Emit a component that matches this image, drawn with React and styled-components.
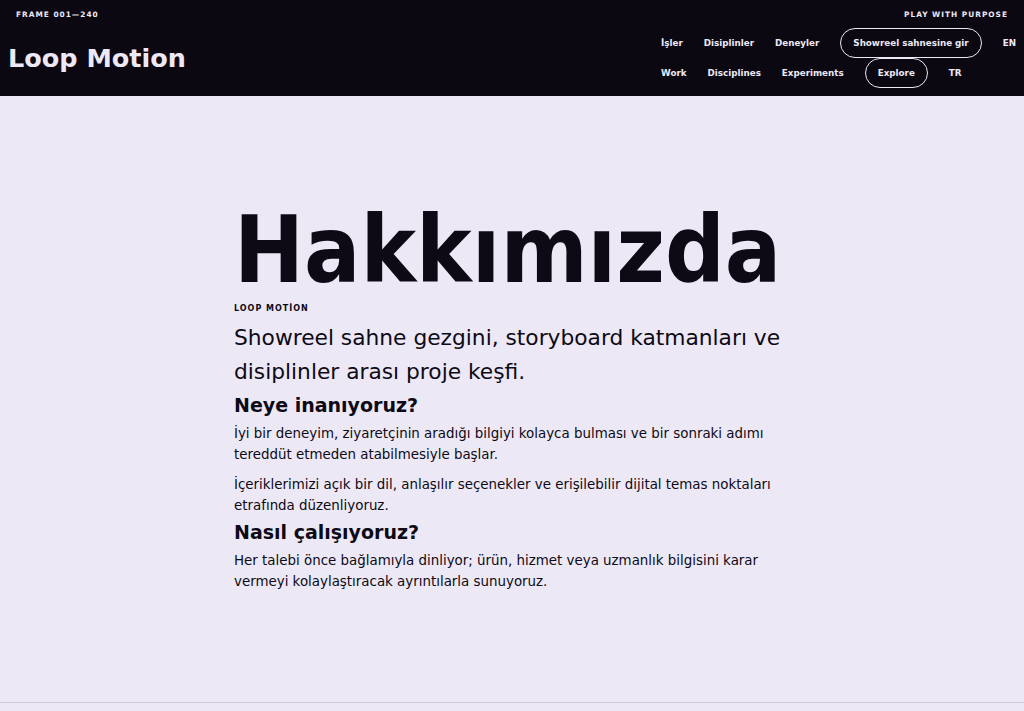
import React from "react"
import styled, { createGlobalStyle } from "styled-components"

const GlobalStyle = createGlobalStyle`
    * { box-sizing: border-box; }
    body {
        margin: 0;
        background: #ece8f6;
        color: #0d0a15;
        font-family: "DejaVu Sans", "Liberation Sans", sans-serif;
    }
`;

const Header = styled.header`
    background: #0b0812;
    color: #ece8f6;
    height: 96px;
`;

const TopStrip = styled.div`
    display: flex;
    justify-content: space-between;
    align-items: center;
    padding: 9px 16px 0;
    height: 20px;
`;

const Kicker = styled.span`
    display: block;
    font-size: ${p => p.$dark ? 8 : 7.4}px;
    line-height: 10px;
    font-weight: 700;
    letter-spacing: 1px;
    color: ${p => p.$dark ? "#0d0a15" : "#ece8f6"};
    margin-top: ${p => p.$dark ? 12 : 0}px;
`;

const MainRow = styled.div`
    display: flex;
    justify-content: space-between;
    align-items: center;
    padding: 8px 8px 0;
`;

const Brand = styled.a`
    font-size: 25.5px;
    font-weight: 700;
    color: #ece8f6;
    text-decoration: none;
`;

const Nav = styled.nav`
    display: flex;
    flex-direction: column;
    align-items: flex-start;
`;

const NavRow = styled.ul`
    display: flex;
    align-items: center;
    list-style: none;
    margin: 0;
    padding: 0;
    height: 30px;
`;

const NavLink = styled.a`
    display: block;
    font-size: 8.75px;
    font-weight: 700;
    color: #ece8f6;
    text-decoration: none;
    white-space: nowrap;
    margin-right: ${p => p.$gap ?? 21}px;
`;

const Pill = styled.button`
    font-family: inherit;
    font-size: 8.75px;
    font-weight: 700;
    color: #ece8f6;
    background: transparent;
    border: 1px solid #ece8f6;
    border-radius: 999px;
    height: 30px;
    padding: 0 12px;
    margin-right: 21px;
    white-space: nowrap;
    cursor: pointer;
`;

const Main = styled.main`
    min-height: 606px;
    display: flex;
    align-items: center;
    justify-content: center;
    padding: 23px 0 20px;
`;

const Article = styled.article`
    width: 556px;
`;

const Title = styled.h1`
    font-family: "DejaVu Sans Condensed", "DejaVu Sans", sans-serif;
    font-stretch: condensed;
    font-size: 93px;
    font-weight: 700;
    line-height: 0.9;
    margin: 0;
`;

const Lead = styled.p`
    font-size: 21.75px;
    line-height: 34px;
    margin: 7px 0 0;
`;

const SectionTitle = styled.h2`
    font-size: 19px;
    font-weight: 700;
    line-height: 24px;
    margin: 6px 0 0;

    p + & {
        margin-top: 4px;
    }
`;

const Paragraph = styled.p`
    font-size: 13.4px;
    line-height: 21px;
    margin: 6px 0 0;

    & + & {
        margin-top: 9px;
    }
`;

const Footer = styled.footer`
    border-top: 1px solid #cdc8da;
    height: 40px;
`;

const App = () => {
    return (
        <>
            <GlobalStyle />
            <Header>
                <TopStrip>
                    <Kicker>FRAME 001—240</Kicker>
                    <Kicker>PLAY WITH PURPOSE</Kicker>
                </TopStrip>
                <MainRow>
                    <Brand href="#">Loop Motion</Brand>
                    <Nav>
                        <NavRow>
                            <li><NavLink href="#">İşler</NavLink></li>
                            <li><NavLink href="#">Disiplinler</NavLink></li>
                            <li><NavLink href="#">Deneyler</NavLink></li>
                            <li><Pill>Showreel sahnesine gir</Pill></li>
                            <li><NavLink href="#" $gap={0}>EN</NavLink></li>
                        </NavRow>
                        <NavRow>
                            <li><NavLink href="#">Work</NavLink></li>
                            <li><NavLink href="#">Disciplines</NavLink></li>
                            <li><NavLink href="#">Experiments</NavLink></li>
                            <li><Pill>Explore</Pill></li>
                            <li><NavLink href="#" $gap={0}>TR</NavLink></li>
                        </NavRow>
                    </Nav>
                </MainRow>
            </Header>
            <Main>
                <Article>
                    <Title>Hakkımızda</Title>
                    <Kicker $dark>LOOP MOTİON</Kicker>
                    <Lead>Showreel sahne gezgini, storyboard katmanları ve disiplinler arası proje keşfi.</Lead>
                    <SectionTitle>Neye inanıyoruz?</SectionTitle>
                    <Paragraph>İyi bir deneyim, ziyaretçinin aradığı bilgiyi kolayca bulması ve bir sonraki adımı tereddüt etmeden atabilmesiyle başlar.</Paragraph>
                    <Paragraph>İçeriklerimizi açık bir dil, anlaşılır seçenekler ve erişilebilir dijital temas noktaları etrafında düzenliyoruz.</Paragraph>
                    <SectionTitle>Nasıl çalışıyoruz?</SectionTitle>
                    <Paragraph>Her talebi önce bağlamıyla dinliyor; ürün, hizmet veya uzmanlık bilgisini karar vermeyi kolaylaştıracak ayrıntılarla sunuyoruz.</Paragraph>
                </Article>
            </Main>
            <Footer />
        </>
    )
}

export default App;
